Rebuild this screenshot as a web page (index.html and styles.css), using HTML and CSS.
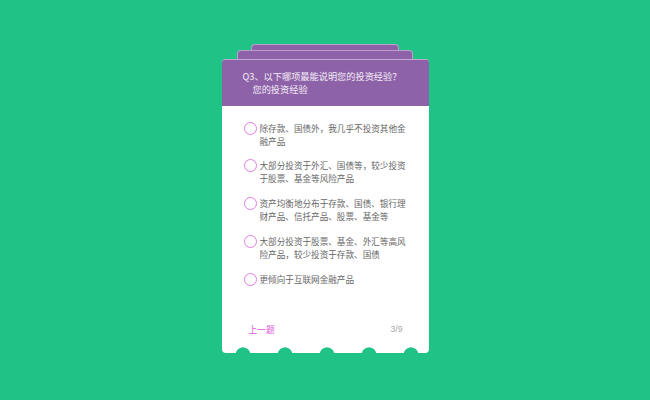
FILE: index.html
```html
<!DOCTYPE html>
<html lang="zh-CN">
<head>
<meta charset="utf-8">
<title>投资问卷</title>
<link rel="stylesheet" href="styles.css">
</head>
<body>
<div class="page">
  <div class="stack">
    <div class="back back-1"></div>
    <div class="back back-2"></div>
    <div class="card">
      <div class="card-head">
        <div class="q-line">Q3、以下哪项最能说明您的投资经验？</div>
        <div class="q-line q-sub">您的投资经验</div>
      </div>
      <ul class="options">
        <li class="option"><span class="radio"></span><span class="opt-text">除存款、国债外，我几乎不投资其他金融产品</span></li>
        <li class="option"><span class="radio"></span><span class="opt-text">大部分投资于外汇、国债等，较少投资于股票、基金等风险产品</span></li>
        <li class="option"><span class="radio"></span><span class="opt-text">资产均衡地分布于存款、国债、银行理财产品、信托产品、股票、基金等</span></li>
        <li class="option"><span class="radio"></span><span class="opt-text">大部分投资于股票、基金、外汇等高风险产品，较少投资于存款、国债</span></li>
        <li class="option"><span class="radio"></span><span class="opt-text">更倾向于互联网金融产品</span></li>
      </ul>
      <div class="card-foot">
        <span class="prev">上一题</span>
        <span class="count">3/9</span>
      </div>
      <div class="scallops"></div>
    </div>
  </div>
</div>
</body>
</html>
```

FILE: styles.css
```css
html, body {
  margin: 0;
  padding: 0;
}
body {
  background: #1fc386;
  font-family: "Noto Sans CJK SC", "Noto Sans", sans-serif;
  width: 650px;
  height: 400px;
  overflow: hidden;
}
.page {
  padding-top: 44px;
  display: flex;
  justify-content: center;
}
.stack {
  width: 207px;
  display: flex;
  flex-direction: column;
  align-items: center;
}
.back {
  box-sizing: border-box;
  background: #8d62a8;
  border: 1px solid rgba(255, 255, 255, 0.4);
  border-bottom: none;
  border-radius: 4px 4px 0 0;
}
.back-1 {
  width: 148px;
  height: 6px;
}
.back-2 {
  width: 176px;
  height: 9px;
}
.card {
  width: 207px;
  background: #ffffff;
  border-radius: 4px;
  overflow: hidden;
  display: flex;
  flex-direction: column;
}
.card-head {
  box-sizing: border-box;
  height: 47px;
  background: #8e62a8;
  border-top: 1px solid rgba(255, 255, 255, 0.45);
  padding: 10px 21px 11px;
  color: #f4eef8;
  font-size: 9.2px;
  line-height: 12.5px;
}
.q-line {
  white-space: nowrap;
}
.q-sub {
  padding-left: 10px;
}
.options {
  list-style: none;
  margin: 0;
  padding: 15.5px 19px 0 22px;
  display: flex;
  flex-direction: column;
  gap: 11.75px;
}
.option {
  display: flex;
  align-items: flex-start;
  gap: 3px;
}
.radio {
  box-sizing: border-box;
  flex: none;
  width: 13px;
  height: 13px;
  border: 1.5px solid #e07de0;
  border-radius: 50%;
}
.opt-text {
  width: 150px;
  font-size: 8.6px;
  line-height: 13px;
  color: #666666;
}
.card-foot {
  margin-top: 37px;
  padding: 0 26px 0 27px;
  display: flex;
  justify-content: space-between;
  font-size: 8.7px;
  line-height: 13px;
}
.prev {
  color: #e057e0;
}
.count {
  color: #a8a8a8;
  font-family: "Liberation Sans", sans-serif;
}
.scallops {
  margin-top: 9.5px;
  height: 8px;
  background-image: radial-gradient(circle at 21px 9.8px, #1fc386 7px, rgba(31, 195, 134, 0) 7.8px);
  background-size: 42px 8px;
  background-repeat: repeat-x;
}
```
